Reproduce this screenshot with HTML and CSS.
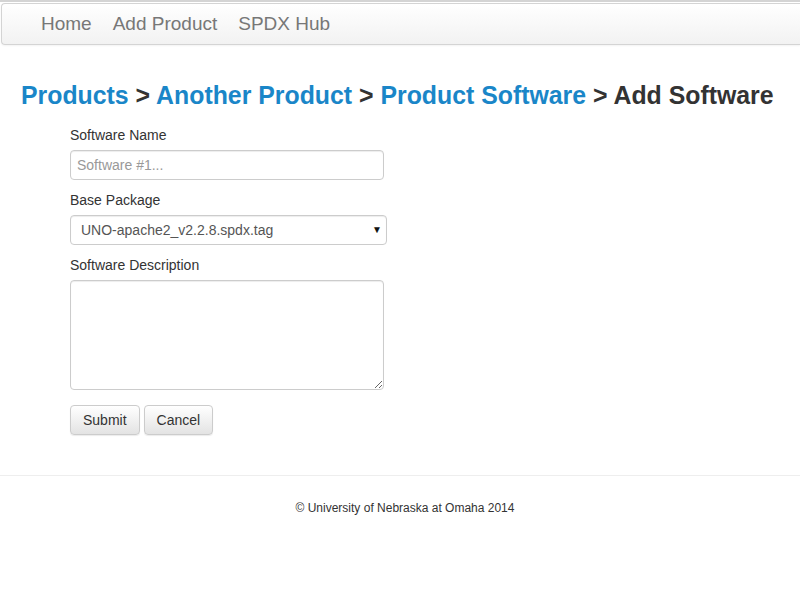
FILE: index.html
```html
<!DOCTYPE html>
<html>
<head>
<meta charset="utf-8">
<link rel="stylesheet" href="styles.css">
</head>
<body>
<div class="topline"></div>
<nav class="navbar">
  <a class="nav-link" href="#">Home</a>
  <a class="nav-link" href="#">Add Product</a>
  <a class="nav-link" href="#">SPDX Hub</a>
</nav>
<h1 class="crumbs"><a href="#">Products</a> &gt; <a href="#">Another Product</a> &gt; <a href="#">Product Software</a> &gt; Add Software</h1>
<form class="form">
  <div class="group">
    <label class="label">Software Name</label>
    <input class="control input" type="text" placeholder="Software #1...">
  </div>
  <div class="group">
    <label class="label">Base Package</label>
    <div class="select-wrap">
      <select class="control select"><option>UNO-apache2_v2.2.8.spdx.tag</option></select>
      <span class="arrow">▼</span>
    </div>
  </div>
  <div class="group">
    <label class="label">Software Description</label>
    <textarea class="control textarea"></textarea>
  </div>
  <div class="buttons">
    <button class="btn" type="button">Submit</button>
    <button class="btn" type="button">Cancel</button>
  </div>
</form>
<hr class="rule">
<footer class="footer">© University of Nebraska at Omaha 2014</footer>
</body>
</html>
```
FILE: styles.css
```css
html, body { margin: 0; padding: 0; background: #fff; }
body { font-family: "Liberation Sans", Arial, sans-serif; font-size: 14px; line-height: 20px; color: #333; }
.topline { height: 2px; background: #d4d4d4; }
.navbar {
  margin: 1px 0 0 1px;
  height: 40px;
  border: 1px solid #d4d4d4;
  border-right: none;
  border-radius: 4px 0 0 4px;
  background: linear-gradient(#ffffff, #f2f2f2);
  display: flex;
  align-items: center;
  padding-left: 29px;
  box-shadow: 0 1px 2px rgba(0,0,0,0.05);
}
.nav-link { color: #777; text-decoration: none; font-size: 19px; padding: 0 10px; line-height: 40px; }
.nav-link + .nav-link { margin-left: 1px; }
.crumbs { margin: 36px 0 0 21px; font-size: 24.85px; font-weight: bold; line-height: 30px; color: #333; white-space: nowrap; }
.crumbs a { color: #1a86c8; text-decoration: none; }
.form { margin: 14px 0 0 70px; }
.group { margin-bottom: 10px; }
.label { display: block; margin-bottom: 5px; font-weight: normal; }
.control {
  display: block; box-sizing: border-box; font-family: "Liberation Sans", Arial, sans-serif; font-size: 14px;
  border: 1px solid #ccc; border-radius: 4px; color: #555; background: #fff;
  box-shadow: inset 0 1px 1px rgba(0,0,0,0.075); margin: 0;
}
.input { width: 314px; height: 30px; padding: 4px 6px; }
.input::placeholder { color: #999; }
.select-wrap { position: relative; width: 317px; }
.select { width: 317px; height: 30px; padding: 4px 10px; appearance: none; -webkit-appearance: none; }
.arrow { position: absolute; right: 5px; top: 5px; font-size: 10px; color: #111; pointer-events: none; }
.textarea { width: 314px; height: 110px; padding: 6px; resize: vertical; }
.buttons { display: flex; gap: 4px; margin-top: 15px; }
.btn {
  font-family: "Liberation Sans", Arial, sans-serif; font-size: 14px; color: #333;
  height: 30px; padding: 0 12px; border: 1px solid #ccc; border-radius: 4px;
  background: linear-gradient(#ffffff, #e3e3e3);
  box-shadow: 0 1px 1px rgba(0,0,0,0.08);
}
.rule { margin: 40px 0 0 0; border: 0; border-top: 1px solid #eee; }
.footer { text-align: center; font-size: 12px; margin-top: 22px; padding-left: 10px; color: #333; }
```
